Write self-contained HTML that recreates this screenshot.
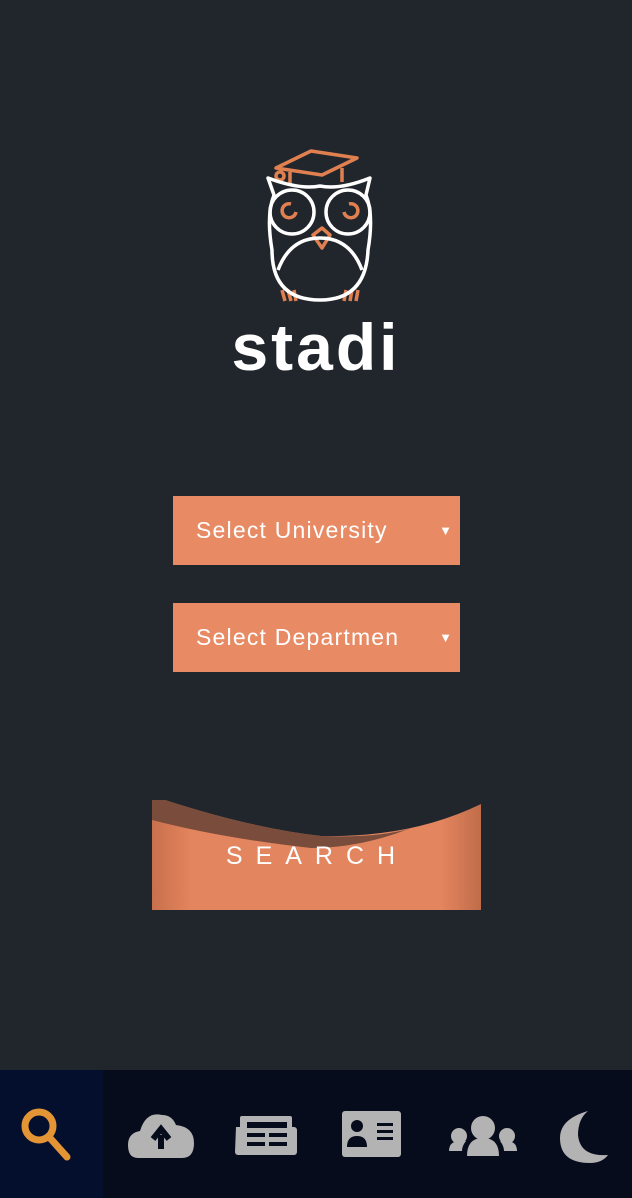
<!DOCTYPE html>
<html><head><meta charset="utf-8"><style>
html,body{margin:0;padding:0;width:632px;height:1198px;overflow:hidden;background:#21262d;font-family:"Liberation Sans",sans-serif;position:relative}
.sel{position:absolute;left:173px;width:287px;height:69px;background:#e88b64;color:#fff;font-size:23px;letter-spacing:1.2px;line-height:69px;box-sizing:border-box;padding-left:23px}
.sel span{position:absolute;right:8px;top:0;font-size:13px;letter-spacing:0}
.nav{position:absolute;left:0;top:1070px;width:632px;height:128px;background:#070c1c}
.nav .act{position:absolute;left:0;top:0;width:103px;height:128px;background:#040f2e}
</style></head><body>
<svg width="632" height="420" style="position:absolute;left:0;top:0">
 <g fill="none" stroke="#e08050" stroke-width="3.5" stroke-linejoin="round">
  <path d="M276 168 L311 151 L357 158 L322 175 Z"/>
  <path d="M290 172 L290 185 M342 168 L342 182"/>
  <circle cx="280" cy="176" r="4"/>
  <path d="M282 290 L285 301 M288 290 L291 301 M294 290 L296 301 M346 290 L344 301 M352 290 L350 301 M358 290 L356 301"/>
  <path d="M296 212 a7 7 0 1 1 -5 -8"/>
  <path d="M344 212 a7 7 0 1 0 5 -8"/>
  <path d="M313 235 L322 228 L330 235 L322 248 Z" fill="none"/>
 </g>
 <g fill="none" stroke="#fff" stroke-width="3.5" stroke-linejoin="round">
  <path d="M268 178 Q300 190 320 186 Q340 190 370 178 L366 195 Q374 215 368 250 Q366 300 320 300 Q272 300 272 250 Q266 215 274 195 Z"/>
  <circle cx="292" cy="212" r="22"/>
  <circle cx="348" cy="212" r="22"/>
  <path d="M278 270 Q290 238 320 238 Q350 238 362 270"/>
 </g>
 <text x="316" y="370" text-anchor="middle" fill="#fff" font-family="Liberation Sans" font-weight="bold" font-size="66" letter-spacing="3">stadi</text>
</svg>
<div class="sel" style="top:496px">Select University<span>▼</span></div>
<div class="sel" style="top:603px">Select Departmen<span>▼</span></div>
<svg width="332" height="114" style="position:absolute;left:151px;top:798px">
 <defs>
  <linearGradient id="g" x1="0" x2="1"><stop offset="0" stop-color="#c8704c"/><stop offset="0.12" stop-color="#e3855e"/><stop offset="0.88" stop-color="#e3855e"/><stop offset="1" stop-color="#c06c4a"/></linearGradient>
 </defs>
 <path d="M1 2 L14 2 Q100 30 170 38 Q260 40 330 6 L330 112 L1 112 Z" fill="url(#g)"/>
 <path d="M1 2 L14 2 Q100 30 170 38 Q230 40 260 30 Q210 50 160 50 Q70 40 1 22 Z" fill="#7a4c3b"/>
 <text x="166" y="66" text-anchor="middle" fill="#fff" font-size="25" letter-spacing="13" font-family="Liberation Sans">SEARCH</text>
</svg>
<div class="nav"><div class="act"></div>
<svg width="632" height="128" style="position:absolute;left:0;top:0">
 <g stroke="#e39435" stroke-width="7" fill="none" stroke-linecap="round"><circle cx="39" cy="56" r="14"/><path d="M50 68 L67 87"/></g>
 <g transform="translate(0,-7)">
 <g fill="#b3b3b3">
  <path d="M138 95 Q128 95 128 82 Q128 70 140 68 Q146 48 162 52 Q172 52 176 62 Q194 64 194 80 Q194 95 182 95 Z"/>
  <path d="M236 64 h58 a3 3 0 0 1 3 3 v22 a3 3 0 0 1 -3 3 h-56 a3 3 0 0 1 -3 -3 z" />
  <rect x="342" y="48" width="59" height="46" rx="3"/>
  <circle cx="483" cy="65" r="12"/><circle cx="459" cy="73" r="8"/><circle cx="507" cy="73" r="8"/>
  <path d="M467 93 q0 -18 16 -18 q16 0 16 18 z"/><path d="M449 88 q0 -10 11 -10 h6 q-4 5 -4 10 z"/><path d="M517 88 q0 -10 -11 -10 h-6 q4 5 4 10 z"/>
  <path d="M588 48 Q560 56 560 75 Q560 100 590 100 Q602 100 608 92 Q580 94 578 72 Q578 56 588 48 Z"/>
 </g>
 <path d="M161 86 V72 M153 76 L161 66 L169 76" stroke="#070c1c" stroke-width="6" fill="none"/>
 <g fill="#070c1c">
  <rect x="240" y="53" width="52" height="36" rx="2" fill="#b3b3b3"/>
  <rect x="247" y="59" width="40" height="6"/><rect x="247" y="70" width="18" height="4"/><rect x="269" y="70" width="18" height="4"/><rect x="247" y="79" width="18" height="4"/><rect x="269" y="79" width="18" height="4"/>
  <circle cx="357" cy="63" r="6"/><path d="M347 84 q0 -11 10 -11 q10 0 10 11 z"/>
  <rect x="377" y="60" width="16" height="3"/><rect x="377" y="67" width="16" height="3"/><rect x="377" y="74" width="16" height="3"/>
 </g>
 </g>
</svg></div>
</body></html>
